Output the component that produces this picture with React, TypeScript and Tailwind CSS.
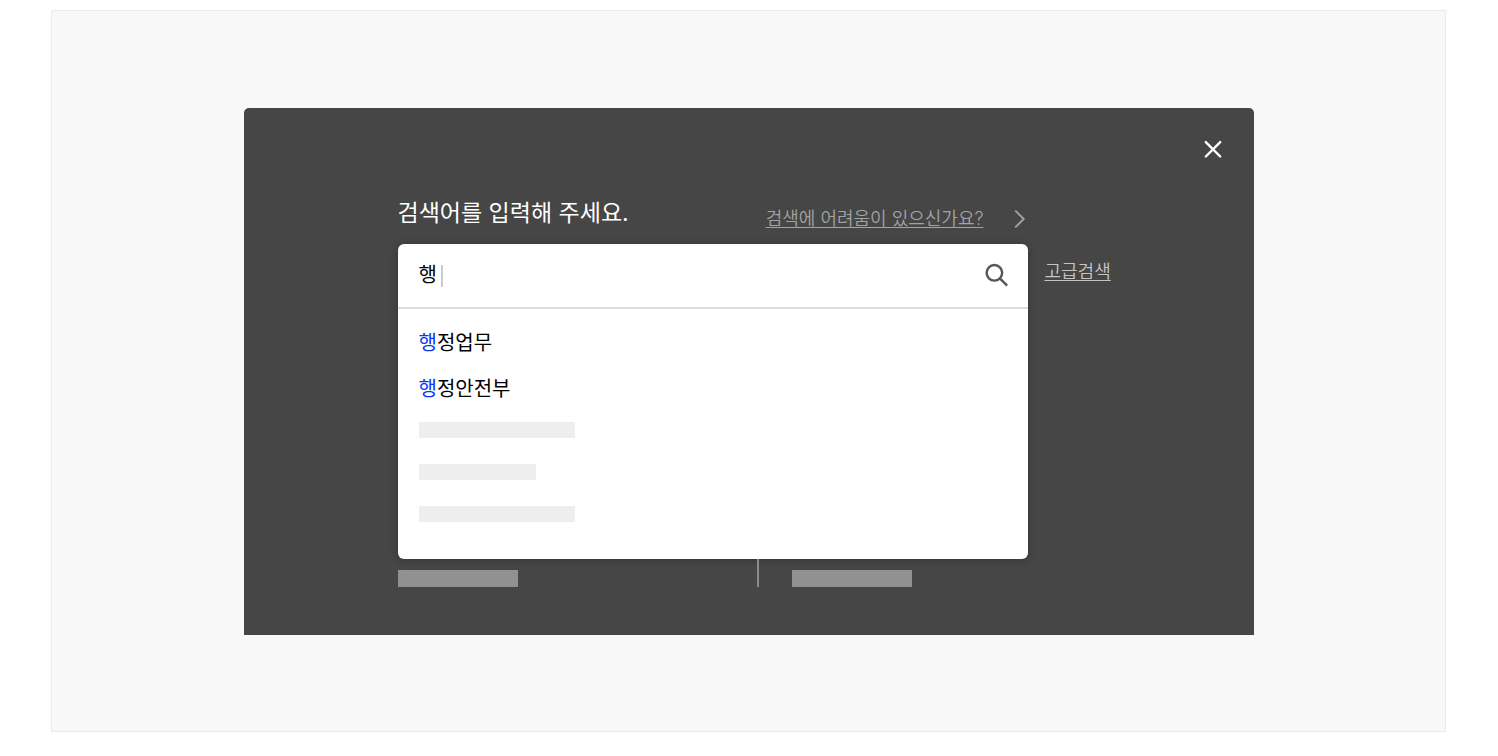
import { useState } from "react";

const suggestions = ["행정업무", "행정안전부"];

function Suggestion({ text, query }: { text: string; query: string }) {
  const matches = query !== "" && text.startsWith(query);
  return (
    <li className="h-[46px]">
      <button type="button" className="block text-xl leading-[30px] text-black">
        {matches && <span className="text-[#0537f5]">{query}</span>}
        {matches ? text.slice(query.length) : text}
      </button>
    </li>
  );
}

export default function App() {
  const [query, setQuery] = useState("행");

  return (
    <div className="pt-[10px] pr-[52px] pb-6 pl-[51px] font-['Inter','Noto_Sans_CJK_KR',sans-serif]">
      <main className="border border-[#ebebeb] bg-[#f8f8f8] px-6 pt-[97px] pb-24">
        <section className="mx-auto max-w-[1010px] rounded-t-[5px] bg-[#464646] pb-12">
          <div className="flex justify-end pt-[29px] pr-[29px]">
            <button type="button" aria-label="닫기" className="text-white">
              <svg viewBox="0 0 24 24" className="block size-6" fill="none" stroke="currentColor" strokeWidth="2.4" strokeLinecap="round">
                <path d="M4.8 5.1 19.2 19.5M19.2 5.1 4.8 19.5" />
              </svg>
            </button>
          </div>

          <div className="flex pt-9 pl-[154px]">
            <div className="w-[630px]">
              <div className="flex h-[47px] items-start justify-between">
                <label htmlFor="search" className="text-[23px] leading-8 text-white">
                  검색어를 입력해 주세요.
                </label>
                <a href="#help" className="mt-[10px] flex items-center gap-7 text-lg leading-6 font-[350] text-[#a3a3a3]">
                  <span className="underline decoration-1 underline-offset-2">검색에 어려움이 있으신가요?</span>
                  <svg viewBox="0 0 16 24" className="h-6 w-4" fill="none" stroke="currentColor" strokeWidth="1.8">
                    <path d="m3.2 3.6 8.6 8.4-8.6 8.4" />
                  </svg>
                </a>
              </div>

              <div className="overflow-hidden rounded-md bg-white shadow-[0_1px_8px_rgba(0,0,0,0.25)]">
                <form className="flex h-[65px] items-center border-b-2 border-[#dcdcdc] pr-5 pb-[2px] pl-[21px]">
                  <div className="relative flex-1">
                    <input
                      id="search"
                      type="text"
                      value={query}
                      onChange={(e) => setQuery(e.target.value)}
                      className="block w-full bg-transparent text-xl leading-[30px] text-black outline-none"
                    />
                    <span className="absolute top-[5px] left-[22px] h-[22px] w-[2px] bg-[#cacaca]" />
                  </div>
                  <button type="button" aria-label="검색" className="text-[#555555]">
                    <svg viewBox="0 0 24 24" className="block size-6" fill="none" stroke="currentColor" strokeWidth="2.4">
                      <circle cx="10.4" cy="9.8" r="7.8" />
                      <path d="m15.8 15.4 7.4 7.2" />
                    </svg>
                  </button>
                </form>
                <div className="px-[21px] pt-[19px] pb-[37px]">
                  <ul>
                    {suggestions.map((text) => (
                      <Suggestion key={text} text={text} query={query} />
                    ))}
                  </ul>
                  <div className="flex flex-col gap-[26px] pt-[2px]">
                    <div className="h-4 w-[156px] bg-[#eeeeee]" />
                    <div className="h-4 w-[117px] bg-[#eeeeee]" />
                    <div className="h-4 w-[156px] bg-[#eeeeee]" />
                  </div>
                </div>
              </div>

              <div className="flex h-7 items-end">
                <div className="h-[17px] w-[120px] bg-[#919191]" />
                <div className="ml-[239px] h-7 w-[2px] bg-[#8a8a8a]" />
                <div className="ml-[33px] h-[17px] w-[120px] bg-[#919191]" />
              </div>
            </div>

            <a href="#advanced" className="mt-[63px] ml-[17px] self-start text-lg leading-6 font-[350] text-[#c4c4c4] underline decoration-1 underline-offset-2">
              고급검색
            </a>
          </div>
        </section>
      </main>
    </div>
  );
}
